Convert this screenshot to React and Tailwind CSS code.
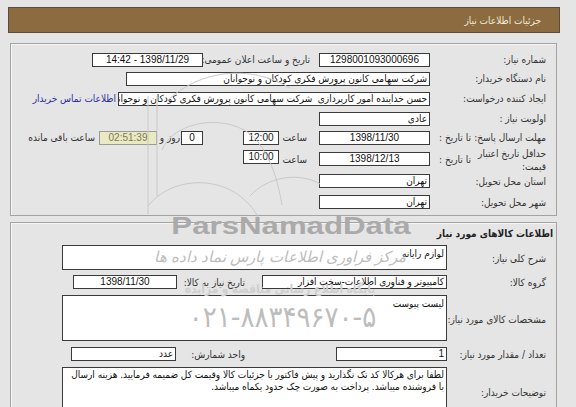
import React from "react";

const font = { fontFamily: "'Liberation Sans', 'DejaVu Sans Condensed', 'DejaVu Sans', sans-serif" };
const narrow = { fontFamily: "'DejaVu Sans Condensed', 'DejaVu Sans', sans-serif", fontStretch: "condensed" };

const Box = ({ className = "", children, center }) => (
  <div
    className={`bg-white border border-[#3a3a3a] text-[#111] h-[14px] leading-[12px] px-[2px] overflow-hidden whitespace-nowrap ${
      center ? "text-center" : "text-right"
    } ${className}`}
  >
    {children}
  </div>
);

const Label = ({ className = "", children }) => (
  <div className={`shrink-0 text-[#333] whitespace-nowrap ${className}`} style={narrow}>
    {children}
  </div>
);

const Watermark = () => (
  <div className="absolute inset-0 pointer-events-none z-10">
    <svg className="absolute left-0 top-0" width="576" height="407" fill="none" stroke="#c9c9c9" strokeWidth="1">
      <path d="M148 96 V214 M157 96 V196" />
      <path d="M162 150 C175 118 235 112 258 142 C272 160 278 182 282 205" />
      <path d="M148 206 C170 178 214 176 240 196 C250 204 256 212 258 218" />
      <path d="M250 196 C268 176 300 172 320 184" />
      <path d="M168 100 C200 70 250 64 290 88" />
    </svg>
    <div
      className="absolute left-[160px] top-[212px] w-[262px] text-center text-[24px] font-bold text-[#aaaaaa] leading-[28px] scale-x-[1.3] origin-center"
      style={font}
    >
      ParsNamadData
    </div>
    <div className="absolute left-[150px] top-[248px] w-[260px] text-center italic text-[15px] text-[#bdbdbd] leading-[18px] whitespace-nowrap" style={font}>
      مرکز فراوری اطلاعات پارس نماد داده ها
    </div>
    <div className="absolute left-[165px] top-[282px] w-[230px] text-center font-bold text-[12px] text-[#cfcfcf] leading-[14px] whitespace-nowrap" style={font}>
      پایگاه اطلاع رسانی مناقصه و مزایده
    </div>
    <div className="absolute left-[170px] top-[300px] w-[225px] text-center text-[29px] text-[#bdbdbd] leading-[34px] whitespace-nowrap" style={font}>
      ۰۲۱-۸۸۳۴۹۶۷۰-۵
    </div>
  </div>
);

export default function App() {
  return (
    <div
      dir="rtl"
      className="relative w-[576px] h-[407px] overflow-hidden bg-[#e5e5e5] text-[10px] leading-[13px]"
      style={font}
    >
      <Watermark />
      <div className="pt-[7px] pr-[16px]">
        {/* header */}
        <div
          className="w-[552px] h-[26px] bg-[#8b6b3f] border border-[#5b4b3b] flex items-center pr-[18px] text-[#f3ebdb]"
          style={narrow}
        >
          جزئیات اطلاعات نیاز
        </div>

        {/* panel 1 */}
        <div className="mt-[10px] mr-[3px] w-[547px] h-[173px] border border-[#a3a3a3] shadow-[inset_1px_1px_0_#f5f5f5] pt-[6px] pr-[10px]">
          <div className="flex items-center h-[19px]">
            <Label className="w-[116px]">شماره نیاز:</Label>
            <Box center className="w-[111px]">1298001093000696</Box>
            <Label className="w-[116px] pr-[9px]">تاریخ و ساعت اعلان عمومی:</Label>
            <Box center className="w-[111px]">1398/11/29 - 14:42</Box>
          </div>
          <div className="flex items-center h-[19px]">
            <Label className="w-[116px]">نام دستگاه خریدار:</Label>
            <Box className="w-[304px]">شرکت سهامی کانون پرورش فکری کودکان و نوجوانان</Box>
          </div>
          <div className="flex items-center h-[21px]">
            <Label className="w-[116px]">ایجاد کننده درخواست:</Label>
            <Box className="w-[312px]">حسن خداینده امور کارپردازی&nbsp;&nbsp;شرکت سهامی کانون پرورش فکری کودکان و نوجوانان</Box>
            <div className="mr-[2px] text-[#2e2e9e] whitespace-nowrap" style={narrow}>
              اطلاعات تماس خریدار
            </div>
          </div>
          <div className="flex items-center h-[19px]">
            <Label className="w-[116px]">اولویت نیاز :</Label>
            <Box className="w-[111px]">عادی</Box>
          </div>
          <div className="flex items-center h-[19px]">
            <div className="w-[116px] shrink-0 flex justify-between pl-[9px] text-[#333] whitespace-nowrap" style={narrow}>
              <span>مهلت ارسال پاسخ:</span>
              <span>تا تاریخ :</span>
            </div>
            <Box center className="w-[111px]">1398/11/30</Box>
            <Label className="w-[40px] pr-[12px]">ساعت</Label>
            <Box center className="w-[36px]">12:00</Box>
            <div className="w-[40px] shrink-0" />
            <Box center className="w-[22px]">0</Box>
            <Label className="w-[24px] pr-[1px]">روز و</Label>
            <div className="w-[58px] h-[14px] leading-[12px] bg-[#e9e9c3] border border-[#9a9a9a] text-center text-[#7c7a55]">
              02:51:39
            </div>
            <Label className="pr-[4px]">ساعت باقی مانده</Label>
          </div>
          <div className="flex items-center h-[24px]">
            <div className="w-[116px] shrink-0 flex items-center justify-between pl-[9px] text-[#333] whitespace-nowrap" style={narrow}>
              <div className="leading-[13px] pt-[1px]">
                <div>حداقل تاریخ اعتبار</div>
                <div>قیمت:</div>
              </div>
              <span>تا تاریخ :</span>
            </div>
            <Box center className="w-[111px]">1398/12/13</Box>
            <Label className="w-[40px] pr-[12px]">ساعت</Label>
            <Box center className="w-[36px] -mt-[4px]">10:00</Box>
          </div>
          <div className="flex items-center h-[20px]">
            <Label className="w-[116px]">استان محل تحویل:</Label>
            <Box className="w-[111px]">تهران</Box>
          </div>
          <div className="flex items-center h-[22px]">
            <Label className="w-[116px]">شهر محل تحویل:</Label>
            <Box className="w-[111px]">تهران</Box>
          </div>
        </div>

        {/* panel 2 */}
        <div className="mt-[6px] mr-[3px] w-[547px] h-[200px] border border-[#a3a3a3] shadow-[inset_1px_1px_0_#f5f5f5] pt-[4px] pr-[3px]">
          <div className="h-[15px] font-bold text-[#222]" style={narrow}>
            اطلاعات کالاهای مورد نیاز
          </div>
          <div className="pr-[7px]">
            <div className="flex items-center h-[30px]">
              <Label className="w-[99px] pt-[3px]">شرح کلی نیاز:</Label>
              <div className="w-[385px] h-[25px] bg-white border border-[#3a3a3a] px-[2px] pt-[1px] text-[#111]">
                لوازم رایانه
              </div>
            </div>
            <div className="flex items-center h-[20px]">
              <Label className="w-[99px]">گروه کالا:</Label>
              <Box className="w-[185px]">کامپیوتر و فناوری اطلاعات-سخت افزار</Box>
              <Label className="w-[85px] pr-[17px]">تاریخ نیاز به کالا:</Label>
              <Box center className="w-[104px]">1398/11/30</Box>
            </div>
            <div className="flex items-center h-[51px]">
              <Label className="w-[99px] pt-[4px]">مشخصات کالای مورد نیاز:</Label>
              <div className="w-[385px] h-[46px] bg-white border border-[#3a3a3a] px-[2px] pt-[1px] text-[#111]">
                لیست پیوست
              </div>
            </div>
            <div className="flex items-center h-[22px]">
              <Label className="w-[99px]">تعداد / مقدار مورد نیاز:</Label>
              <Box className="w-[111px]">1</Box>
              <Label className="w-[160px] pr-[91px]">واحد شمارش:</Label>
              <Box className="w-[105px]">عدد</Box>
            </div>
            <div className="flex items-center h-[54px] pt-[1px]">
              <Label className="w-[99px]">توضیحات خریدار:</Label>
              <div className="w-[385px] h-[52px] bg-white border border-[#3a3a3a] px-[2px] pt-[1px] text-[#111] leading-[12px]">
                لطفا برای هرکالا کد تک نگذارید و پیش فاکتور با جزئیات کالا وقیمت کل ضمیمه فرمایید. هزینه ارسال با فروشنده میباشد. پرداخت به صورت چک حدود یکماه میباشد.
              </div>
            </div>
          </div>
        </div>
      </div>
    </div>
  );
}
